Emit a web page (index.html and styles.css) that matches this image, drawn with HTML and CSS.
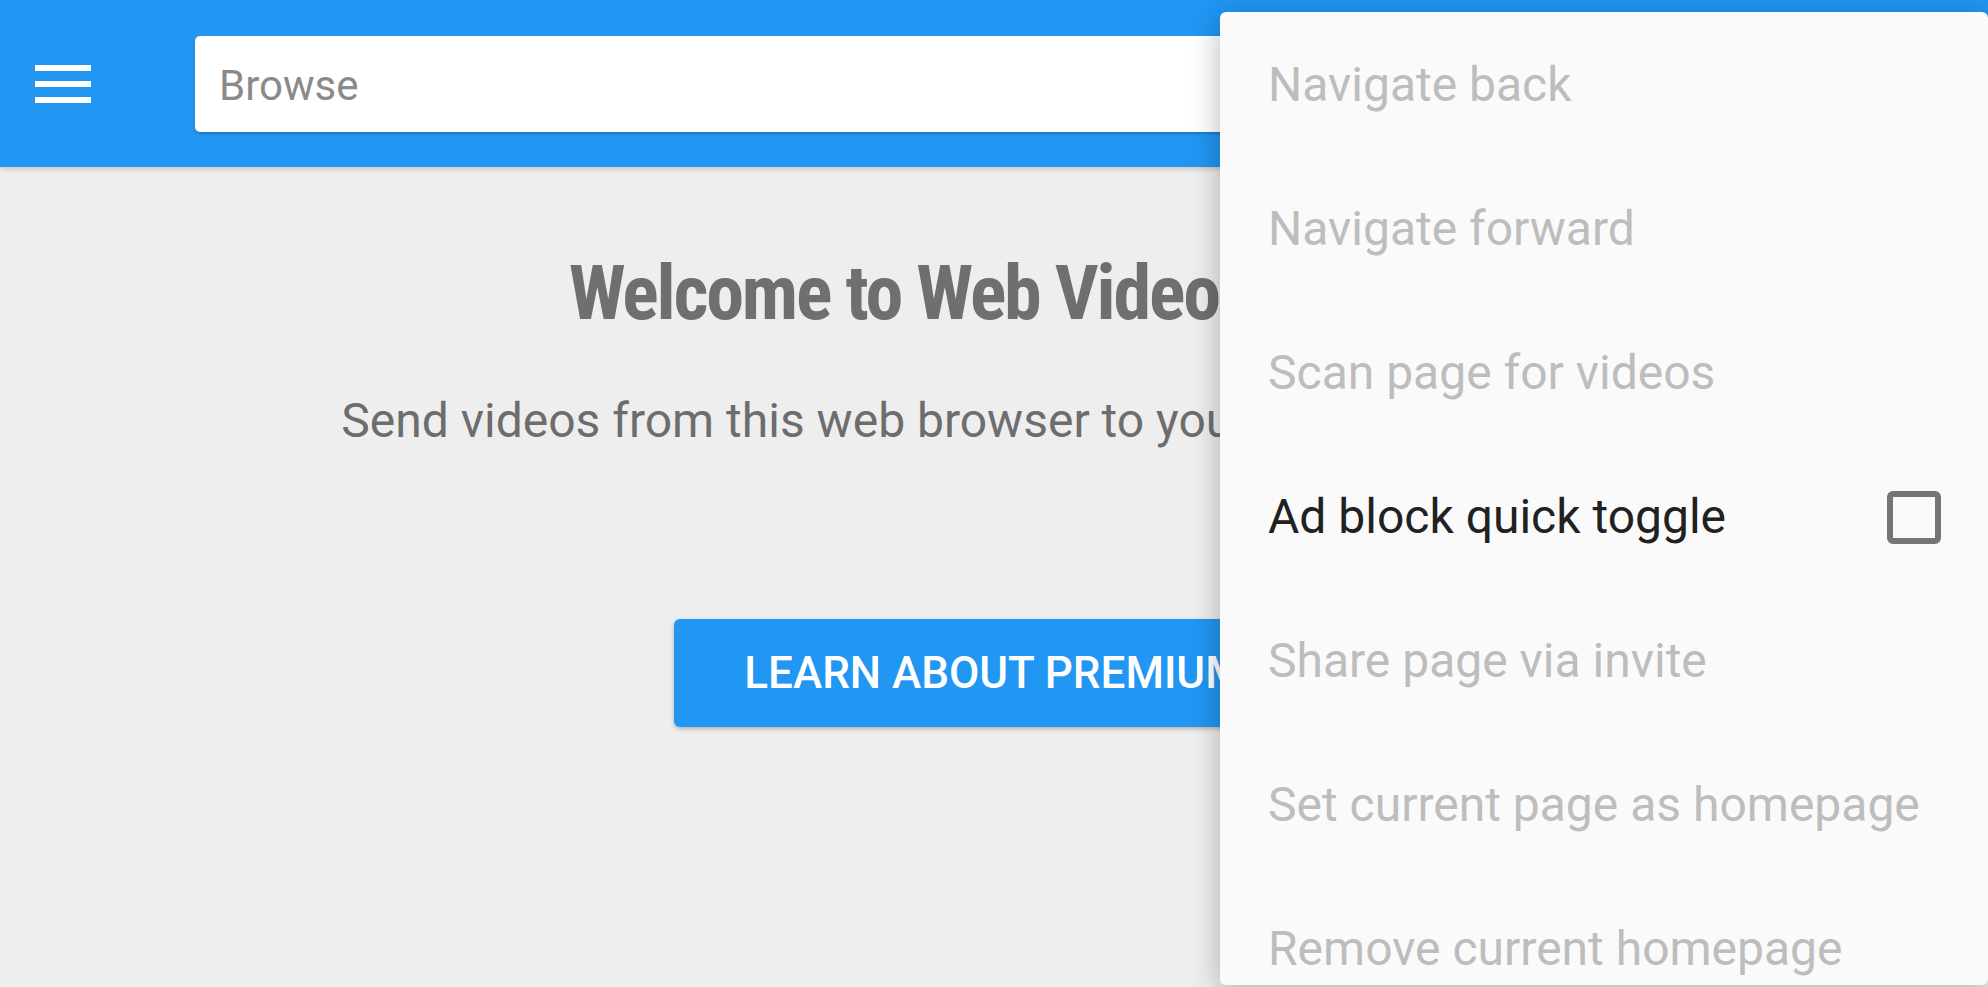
FILE: index.html
```html
<!DOCTYPE html>
<html lang="en">
<head>
    <meta charset="UTF-8">
    <title>Web Video Caster</title>
    <link rel="stylesheet" href="styles.css">
</head>
<body>
<div class="pantalla">
    <header class="barra">
        <div class="menu-icono">
            <span></span><span></span><span></span>
        </div>
        <div class="buscador">Browse</div>
    </header>

    <main class="inicio">
        <h1 class="titulo">Welcome to Web Video Caster</h1>
        <p class="subtitulo">Send videos from this web browser to your TV or Chromecast</p>
        <button class="premium">LEARN ABOUT PREMIUM</button>
    </main>

    <!-- menu de opciones abierto -->
    <ul class="opciones">
        <li class="opcion inactiva">Navigate back</li>
        <li class="opcion inactiva">Navigate forward</li>
        <li class="opcion inactiva">Scan page for videos</li>
        <li class="opcion">
            <span>Ad block quick toggle</span>
            <span class="casilla"></span>
        </li>
        <li class="opcion inactiva">Share page via invite</li>
        <li class="opcion inactiva">Set current page as homepage</li>
        <li class="opcion inactiva">Remove current homepage</li>
    </ul>
</div>
</body>
</html>
```

FILE: styles.css
```css
body {
    margin: 0;
    font-family: Roboto, "Noto Sans", sans-serif;
    background: #eeeeee;
    overflow: hidden;
}
.pantalla {
    position: relative;
    width: 1988px;
    height: 987px;
    overflow: hidden;
}
.barra {
    height: 167px;
    background: #2196f3;
    display: flex;
    align-items: center;
    padding-left: 35px;
    box-shadow: 0 2px 5px rgba(0,0,0,0.18);
    position: relative;
}
.menu-icono {
    width: 56px;
    display: flex;
    flex-direction: column;
    gap: 10px;
    margin-right: 104px;
}
.menu-icono span {
    display: block;
    height: 6px;
    background: #fff;
}
.buscador {
    flex: 1;
    height: 96px;
    margin-right: 48px;
    background: #fff;
    border-radius: 5px;
    box-shadow: 0 2px 3px rgba(0,0,0,0.2);
    display: flex;
    align-items: center;
    padding: 3px 0 0 24px;
    box-sizing: border-box;
    font-size: 42px;
    color: #8a8a8a;
}
.inicio {
    display: flex;
    flex-direction: column;
    align-items: center;
    text-align: center;
}
.titulo {
    margin: 81px 0 0;
    font-size: 76px;
    line-height: 90px;
    font-weight: 700;
    font-stretch: 75%;
    letter-spacing: -2.2px;
    color: #6f6f6f;
}
.subtitulo {
    margin: 53px 0 0;
    font-size: 48px;
    line-height: 60px;
    color: #6d6d6d;
}
.premium {
    margin-top: 168px;
    height: 108px;
    padding: 0 70px;
    border: none;
    border-radius: 6px;
    background: #2196f3;
    color: #fff;
    font-family: Roboto, sans-serif;
    font-size: 44px;
    font-weight: 500;
    box-shadow: 0 2px 4px rgba(0,0,0,0.25);
}
.opciones {
    position: absolute;
    top: 12px;
    right: 0;
    bottom: 2px;
    width: 768px;
    margin: 0;
    padding: 1px 0 0;
    list-style: none;
    background: #fafafa;
    border-radius: 6px;
    box-shadow: 0 6px 30px rgba(0,0,0,0.28);
    overflow: hidden;
}
.opcion {
    height: 144px;
    line-height: 144px;
    padding: 0 47px 0 48px;
    font-size: 48px;
    color: #212121;
    display: flex;
    justify-content: space-between;
    align-items: center;
    white-space: nowrap;
}
.inactiva {
    color: #bdbdbd;
}
.casilla {
    width: 42px;
    height: 41px;
    border: 6px solid #757575;
    border-radius: 6px;
}
```
